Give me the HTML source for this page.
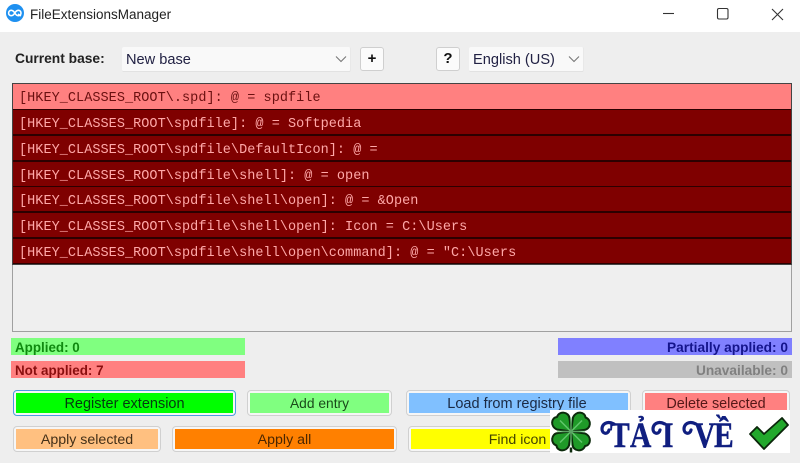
<!DOCTYPE html>
<html>
<head>
<meta charset="utf-8">
<style>
html,body{margin:0;padding:0;width:800px;height:463px;overflow:hidden;background:#eeeeee;font-family:"Liberation Sans",sans-serif}
div{position:absolute;box-sizing:border-box;white-space:nowrap}
#tb{left:0;top:0;width:800px;height:32px;background:#fff}
#title{left:30px;top:6px;font-size:13.5px;line-height:18px;color:#222}
.combo{background:#f9f9f9;border-bottom:1px solid #e2e2e2;border-right:1px solid #e8e8e8;height:25px;top:47px;font-size:14.6px;line-height:26px;padding-left:4px;color:#222244;border-radius:2px}
.tool{top:47px;width:24px;height:24px;background:#fbfbfb;border:1px solid #cfcfcf;border-radius:3px;text-align:center;font-weight:bold;font-size:15px;line-height:22px;color:#111}
#list{left:12px;top:83px;width:780px;height:249px;border:1px solid #a0a0a0;background:#efefef}
#back{left:12px;top:83px;width:780px;height:182px;background:#2c0000;border:1px solid #444}
.row{left:13px;width:778px;height:24px;background:#7f0000;color:#ffa8a8;font-family:"Liberation Mono",monospace;font-size:13.5px;line-height:29px;padding-left:6px;letter-spacing:.05px}
.row.s{background:#ff8080;color:#6a1010;height:25px}
.st{height:17px;width:234px;font-size:13.4px;font-weight:bold;line-height:19px;padding:0 4px}
.btn{height:26px;background:#f6f6f6;border:1px solid #d0d0d0;border-radius:4px;padding:2px}
.btn span{display:block;height:20px;text-align:center;font-size:14.2px;line-height:22px}
.l{font-family:'Liberation Serif','Noto Serif CJK SC',serif;font-weight:bold;font-size:36px;line-height:42px;color:#101f80;top:414px;transform:scaleX(.82);transform-origin:left top;-webkit-text-stroke:.5px #101f80}
</style>
</head>
<body>
<div id="tb"></div>
<svg style="position:absolute;left:6px;top:4px" width="18" height="18" viewBox="0 0 18 18"><circle cx="9" cy="9" r="9" fill="#1e90f0"/><path d="M8.800 9C7.600 7 6.600 6.300 5.300 6.300A2.700 2.700 0 0 0 5.300 11.700C6.600 11.700 7.600 11 8.800 9C10 7 11 6.300 12.300 6.300A2.700 2.700 0 0 1 12.300 11.700C11 11.700 10 11 8.800 9Z" fill="none" stroke="#fff" stroke-width="1.600"/><path d="M12 10l3 2" stroke="#fff" stroke-width="1.400"/></svg>
<div id="title">FileExtensionsManager</div>
<svg style="position:absolute;left:655px;top:0" width="145" height="32" viewBox="0 0 145 32" fill="none" stroke="#333" stroke-width="1.100"><path d="M8 13.500H19"/><rect x="62.500" y="8.500" width="10.500" height="10.500" rx="1.500"/><path d="M117 9L128 20M128 9L117 20"/></svg>

<div style="left:15px;top:50px;font-size:13.8px;font-weight:bold;line-height:17px;color:#222">Current base:</div>
<div class="combo" style="left:122px;width:229px">New base</div>
<svg style="position:absolute;left:335px;top:55px" width="12" height="8" fill="none" stroke="#777" stroke-width="1.100"><path d="M1 1.500L6 6.500L11 1.500"/></svg>
<div class="tool" style="left:360px">+</div>
<div class="tool" style="left:436px">?</div>
<div class="combo" style="left:469px;width:115px">English (US)</div>
<svg style="position:absolute;left:568px;top:55px" width="12" height="8" fill="none" stroke="#777" stroke-width="1.100"><path d="M1 1.500L6 6.500L11 1.500"/></svg>

<div id="list"></div>
<div id="back"></div>
<div class="row s" style="top:84px">[HKEY_CLASSES_ROOT\.spd]: @ = spdfile</div>
<div class="row" style="top:110px">[HKEY_CLASSES_ROOT\spdfile]: @ = Softpedia</div>
<div class="row" style="top:136px">[HKEY_CLASSES_ROOT\spdfile\DefaultIcon]: @ =</div>
<div class="row" style="top:162px">[HKEY_CLASSES_ROOT\spdfile\shell]: @ = open</div>
<div class="row" style="top:187px">[HKEY_CLASSES_ROOT\spdfile\shell\open]: @ = &amp;Open</div>
<div class="row" style="top:213px">[HKEY_CLASSES_ROOT\spdfile\shell\open]: Icon = C:\Users</div>
<div class="row" style="top:239px">[HKEY_CLASSES_ROOT\spdfile\shell\open\command]: @ = "C:\Users</div>

<div class="st" style="left:11px;top:338px;background:#80ff80;color:#0f8a0f">Applied: 0</div>
<div class="st" style="left:11px;top:361px;background:#ff8080;color:#8a0f0f">Not applied: 7</div>
<div class="st" style="left:558px;top:338px;background:#8080ff;color:#14148c;text-align:right;font-size:13.7px">Partially applied: 0</div>
<div class="st" style="left:558px;top:361px;background:#c0c0c0;color:#808080;text-align:right;font-size:13.7px">Unavailable: 0</div>

<div class="btn" style="left:13px;top:390px;width:223px;border-color:#4a9be0"><span style="background:#00ff00;color:#043a10;font-size:14.500px">Register extension</span></div>
<div class="btn" style="left:247px;top:390px;width:145px"><span style="background:#80ff80;color:#1a4a1a;font-size:13.800px">Add entry</span></div>
<div class="btn" style="left:406px;top:390px;width:225px"><span style="background:#80c0ff;color:#1a2a44;font-size:14.500px;padding-right:3px">Load from registry file</span></div>
<div class="btn" style="left:642px;top:390px;width:148px"><span style="background:#ff8080;color:#551818;font-size:14.400px">Delete selected</span></div>
<div class="btn" style="left:13px;top:426px;width:148px"><span style="background:#ffc080;color:#443018">Apply selected</span></div>
<div class="btn" style="left:172px;top:426px;width:225px"><span style="background:#ff8000;color:#4a2600">Apply all</span></div>
<div class="btn" style="left:408px;top:426px;width:225px"><span style="background:#ffff00;color:#444400;padding-right:6px">Find icon</span></div>

<div style="left:550px;top:410px;width:240px;height:43px;background:#fff"></div>
<svg style="position:absolute;left:550px;top:410px" width="42" height="43" viewBox="-21 -21.500 42 43">
<g fill="#1f9a28" stroke="#0c2a0c" stroke-width="2" stroke-linejoin="round">
<path d="M0 0L-1.500 -13C-2 -20 -12 -21 -14 -14.500C-20 -14 -21 -5 -14 -2Z"/>
<path transform="rotate(90)" d="M0 0L-1.500 -13C-2 -20 -12 -21 -14 -14.500C-20 -14 -21 -5 -14 -2Z"/>
<path transform="rotate(180)" d="M0 0L-1.500 -13C-2 -20 -12 -21 -14 -14.500C-20 -14 -21 -5 -14 -2Z"/>
<path transform="rotate(270)" d="M0 0L-1.500 -13C-2 -20 -12 -21 -14 -14.500C-20 -14 -21 -5 -14 -2Z"/>
</g>
<path d="M-11 -11L11 11M11 -11L-11 11M0 -14V14M-14 0H14" stroke="#7fd98a" stroke-width="1.500" opacity=".7"/>
<path d="M0 16V21" stroke="#0c2a0c" stroke-width="2.500"/>
</svg>
<svg style="position:absolute;left:595px;top:415px" width="110" height="36" fill="none" stroke="#101f80" stroke-width="3.200" stroke-linecap="round"><path d="M19 9C11 5 7 10 7 14C7 19 13 20 14 15"/><path d="M70 9C62 5 58 10 58 14C58 19 64 20 65 15"/><path d="M101 9C93 5 89 10 89 14C89 19 95 20 96 15"/></svg>
<div class="l" style="left:610px">T</div>
<div class="l" style="left:630px">Ả</div>
<div class="l" style="left:662px">I</div>
<div class="l" style="left:694px">V</div>
<div class="l" style="left:714px">Ề</div>
<svg style="position:absolute;left:748px;top:417px" width="42" height="34" viewBox="0 0 42 34"><path d="M2 17L9 10L16 17L34 1L40 8L16 32Z" fill="#22a82c" stroke="#0b260b" stroke-width="1.800" stroke-linejoin="round"/></svg>
</body>
</html>
